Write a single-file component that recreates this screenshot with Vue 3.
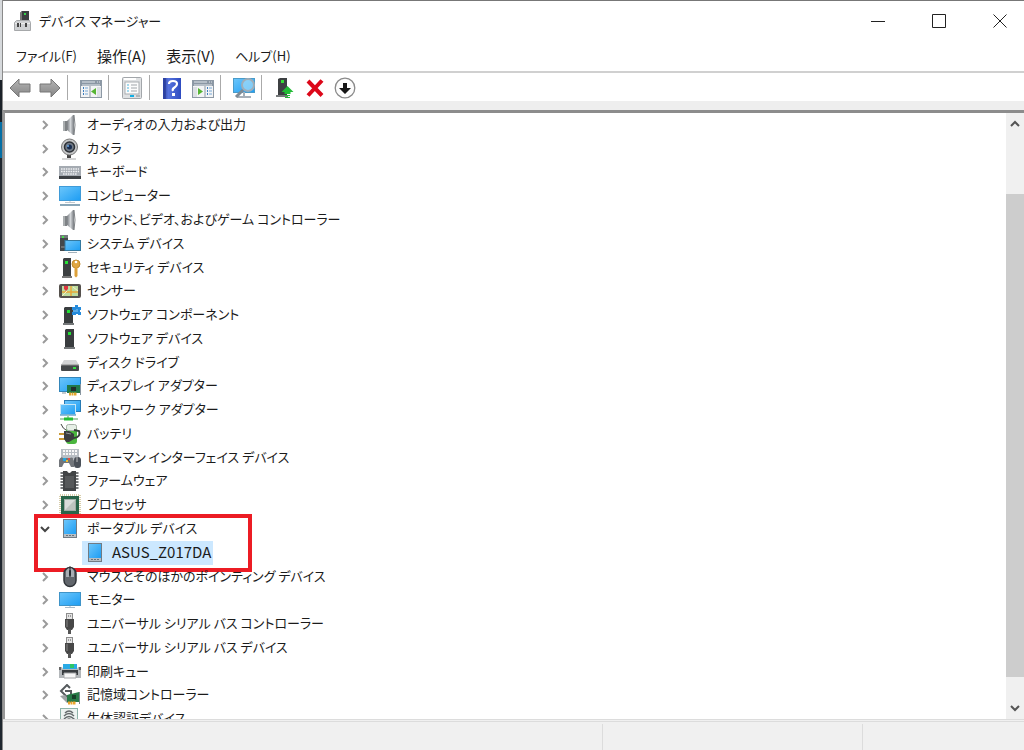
<script setup>
const menus = [
  { text: 'ファイル(F)' },
  { text: '操作(A)', wide: true },
  { text: '表示(V)', wide: true },
  { text: 'ヘルプ(H)' },
]

const tools = [
  [
    { icon: 'back', label: '戻る' },
    { icon: 'forward', label: '進む' },
  ],
  [{ icon: 'tree-pane', label: 'コンソール ツリーの表示' }],
  [{ icon: 'properties', label: 'プロパティ' }],
  [
    { icon: 'help', label: 'ヘルプの表示' },
    { icon: 'action-pane', label: '操作ウィンドウの表示' },
  ],
  [{ icon: 'scan', label: 'ハードウェア変更のスキャン' }],
  [
    { icon: 'update', label: 'ドライバーの更新' },
    { icon: 'remove', label: 'デバイスのアンインストール' },
    { icon: 'disable', label: 'デバイスを無効にする' },
  ],
]

const devices = [
  { icon: 'speaker', name: 'オーディオの入力および出力' },
  { icon: 'camera', name: 'カメラ' },
  { icon: 'keyboard', name: 'キーボード' },
  { icon: 'computer', name: 'コンピューター' },
  { icon: 'speaker', name: 'サウンド、ビデオ、およびゲーム コントローラー' },
  { icon: 'system', name: 'システム デバイス' },
  { icon: 'security', name: 'セキュリティ デバイス' },
  { icon: 'sensor', name: 'センサー' },
  { icon: 'component', name: 'ソフトウェア コンポーネント' },
  { icon: 'software', name: 'ソフトウェア デバイス' },
  { icon: 'disk', name: 'ディスク ドライブ' },
  { icon: 'display', name: 'ディスプレイ アダプター' },
  { icon: 'network', name: 'ネットワーク アダプター' },
  { icon: 'battery', name: 'バッテリ' },
  { icon: 'hid', name: 'ヒューマン インターフェイス デバイス' },
  { icon: 'firmware', name: 'ファームウェア' },
  { icon: 'cpu', name: 'プロセッサ' },
  { icon: 'portable', name: 'ポータブル デバイス', children: ['ASUS_Z017DA'] },
  { icon: 'mouse', name: 'マウスとそのほかのポインティング デバイス' },
  { icon: 'monitor', name: 'モニター' },
  { icon: 'usb', name: 'ユニバーサル シリアル バス コントローラー' },
  { icon: 'usb', name: 'ユニバーサル シリアル バス デバイス' },
  { icon: 'printer', name: '印刷キュー' },
  { icon: 'storage', name: '記憶域コントローラー' },
  { icon: 'biometric', name: '生体認証デバイス' },
]
</script>

<template>
  <div class="desktop">
    <svg class="defs" aria-hidden="true">
      <defs>
        <linearGradient id="g-screen" x1="0" y1="0" x2="1" y2="1">
          <stop offset="0" stop-color="#6cc6fb" />
          <stop offset="1" stop-color="#1d9df3" />
        </linearGradient>
        <linearGradient id="g-metal" x1="0" y1="0" x2="1" y2="0">
          <stop offset="0" stop-color="#777b80" />
          <stop offset=".5" stop-color="#d2d5d8" />
          <stop offset="1" stop-color="#777b80" />
        </linearGradient>
        <linearGradient id="g-arrow" x1="0" y1="0" x2="0" y2="1">
          <stop offset="0" stop-color="#b5b5b5" />
          <stop offset="1" stop-color="#858585" />
        </linearGradient>
        <linearGradient id="g-help" x1="0" y1="0" x2="1" y2="0">
          <stop offset="0" stop-color="#2a3fa0" />
          <stop offset=".3" stop-color="#5673de" />
          <stop offset="1" stop-color="#2d4bc0" />
        </linearGradient>

        <symbol id="device-manager" viewBox="0 0 20 22">
          <path d="M7 10V3l2-2h7v9z" fill="#3b3e40" />
          <path d="M7 3l2-2v9H7z" fill="#777" />
          <rect x="11" y="3" width="2" height="2" fill="#35d44a" />
          <path d="M3.500 10.500h13l1 2v8h-16v-8z" fill="#cfd1d3" stroke="#a6a8aa" />
          <path d="M2 13.500h15" stroke="#ececec" />
          <path d="M4 13h2v4H4zM7 13h1v4H7zM12 13h2v4h-2z" fill="#444" />
        </symbol>
        <symbol id="back" viewBox="0 0 22 22">
          <path d="M1 11L10 2v5h11v8H10v5z" fill="url(#g-arrow)" stroke="#777" />
        </symbol>
        <symbol id="forward" viewBox="0 0 22 22">
          <path d="M21 11L12 2v5H1v8h11v5z" fill="url(#g-arrow)" stroke="#777" />
        </symbol>
        <symbol id="tree-pane" viewBox="0 0 22 22">
          <rect x=".5" y="3.500" width="21" height="17" fill="#f3f4f5" stroke="#8d99a5" />
          <rect x="1" y="4" width="20" height="5" fill="#8b97a4" />
          <path d="M2 5h13M17 5h1M19 5h1M2 8h18" stroke="#dfe5ea" />
          <path d="M10 9v11" stroke="#8d99a5" />
          <path d="M3 11h1M3 14h1M3 17h1" stroke="#3d7fc0" stroke-width="2" />
          <path d="M5 11h3M5 14h3M5 17h3" stroke="#78a9d6" />
          <path d="M16 11v7l-5-3.500z" fill="#56b533" />
          <path d="M17 10v10h4V10z" fill="#dce0e4" />
        </symbol>
        <symbol id="action-pane" viewBox="0 0 22 22">
          <rect x=".5" y="3.500" width="21" height="17" fill="#f3f4f5" stroke="#8d99a5" />
          <rect x="1" y="4" width="20" height="5" fill="#8b97a4" />
          <path d="M2 5h13M17 5h1M19 5h1M2 8h18" stroke="#dfe5ea" />
          <path d="M13 9v11" stroke="#8d99a5" />
          <path d="M15 11h1M15 14h1M15 17h1" stroke="#3d7fc0" stroke-width="2" />
          <path d="M17 11h3M17 14h3M17 17h3" stroke="#78a9d6" />
          <path d="M6 11v7l5-3.500z" fill="#56b533" />
          <path d="M1 10v10h4V10z" fill="#dce0e4" />
        </symbol>
        <symbol id="properties" viewBox="0 0 22 22">
          <rect x="1.500" y=".5" width="19" height="21" rx="1" fill="#dfe1e3" stroke="#a2a6aa" />
          <path d="M3 2h12" stroke="#fff" stroke-width="2" />
          <rect x="4" y="5" width="14" height="12" fill="#fcfcfc" stroke="#a9adb1" />
          <path d="M6 8h2M6 11h2M6 14h2" stroke="#4ab5df" />
          <path d="M10 8h6M10 11h6M10 14h6" stroke="#a0a5aa" />
          <path d="M9 19h4" stroke="#12aee3" stroke-width="2" />
          <path d="M15 19h4" stroke="#b1b5b8" stroke-width="2" />
        </symbol>
        <symbol id="help" viewBox="0 0 22 22">
          <rect x="1" y="1" width="18" height="21" fill="url(#g-help)" />
          <path d="M3 1v21" stroke="#24378f" />
          <path d="M7 7q0-3 4-3t4 3q0 2-2.500 3.500T11 14" fill="none" stroke="#fff" stroke-width="2.200" />
          <rect x="10" y="16" width="3" height="3" fill="#fff" />
        </symbol>
        <symbol id="scan" viewBox="0 0 22 22">
          <rect x=".5" y="1.500" width="21" height="14" fill="url(#g-screen)" stroke="#4a9bc9" />
          <path d="M11 15v4M4 20h14" stroke="#a6afb8" stroke-width="2" />
          <circle cx="15" cy="8" r="6" fill="#9edaf8" fill-opacity=".75" stroke="#9faeb9" stroke-width="2" />
          <path d="M10 13l-7 7" stroke="#7f8b95" stroke-width="3" />
        </symbol>
        <symbol id="update" viewBox="0 0 22 22">
          <path d="M4 2l2-1h7v17H4z" fill="#3d4042" />
          <path d="M2 18h12v2H2z" fill="#777a7c" />
          <rect x="7" y="3" width="3" height="3" fill="#35dc35" />
          <path d="M13.500 9l6 6h-3v2h-6v-2h-3z" fill="#23bb36" />
          <path d="M11 18.500h5M11 20.500h5" stroke="#23bb36" />
        </symbol>
        <symbol id="remove" viewBox="0 0 22 22">
          <path d="M4 4L18 18.500M18 3.500L4 18.500" stroke="#dc0719" stroke-width="4" />
        </symbol>
        <symbol id="disable" viewBox="0 0 22 22">
          <circle cx="11" cy="11" r="9.800" fill="#fcfcfc" stroke="#8a8a8a" stroke-width="1.300" />
          <path d="M9 6h4v5h4l-6 6-6-6h4z" fill="#151515" />
        </symbol>

        <symbol id="speaker" viewBox="0 0 22 22">
          <path d="M4 7h4v10H4z" fill="#7e8285" />
          <path d="M4 7h2v10H4z" fill="#aaaeb0" />
          <path d="M8 7l6-6h1v20h-1l-6-5z" fill="url(#g-metal)" />
          <path d="M15 1q2 10 0 20" fill="none" stroke="#7e8285" />
        </symbol>
        <symbol id="camera" viewBox="0 0 22 22">
          <path d="M8 17h4v3H8z" fill="#444" />
          <path d="M3 21h14" stroke="#aaa" />
          <circle cx="10.500" cy="9" r="8" fill="#c5c6c7" stroke="#797979" />
          <circle cx="10.500" cy="9" r="5" fill="#727b87" stroke="#2c3035" stroke-width="1.500" />
          <circle cx="10.500" cy="9" r="2.500" fill="#182d50" />
          <circle cx="9" cy="8" r="1" fill="#6da8e6" />
        </symbol>
        <symbol id="keyboard" viewBox="0 0 22 22">
          <rect x="0" y="5" width="22" height="12" fill="#a5abb2" />
          <path d="M2 8h18M2 10.500h18M4 13h14" stroke="#eef0f2" stroke-width="1.500" stroke-dasharray="1.600 .8" />
          <path d="M0 15h22v3H0z" fill="#3c4044" />
        </symbol>
        <symbol id="computer" viewBox="0 0 22 22">
          <rect x=".5" y="1.500" width="21" height="14" fill="url(#g-screen)" stroke="#3f9bd8" />
          <path d="M11 16v2M6 17.500h10" stroke="#c2c9cf" />
          <path d="M1 20h20" stroke="#8aa7b8" stroke-width="2" />
        </symbol>
        <symbol id="system" viewBox="0 0 22 22">
          <path d="M1 2h8v16H1z" fill="#44484b" />
          <path d="M1 2h8v3H1z" fill="#74797d" />
          <path d="M3 4h2" stroke="#49e04b" stroke-width="2" />
          <path d="M2 14h5" stroke="#999" />
          <rect x="6" y="7.500" width="15.500" height="10" fill="url(#g-screen)" stroke="#35799f" />
          <path d="M9 19.500h9" stroke="#a5b2bb" />
        </symbol>
        <symbol id="security" viewBox="0 0 22 22">
          <path d="M4 2l1-1h7v18H4z" fill="#3c3f41" />
          <path d="M3 20h10" stroke="#777" stroke-width="2" />
          <rect x="6" y="4" width="3" height="3" fill="#27e037" />
          <circle cx="17" cy="7" r="4" fill="#e0a743" stroke="#c18a2d" />
          <circle cx="17" cy="5" r="1.300" fill="#fff" />
          <path d="M15.500 10h3v9l-1.500 1.500-1.500-1.500z" fill="#dda13b" />
        </symbol>
        <symbol id="sensor" viewBox="0 0 22 22">
          <rect x="0" y="4" width="22" height="14" rx="2" fill="#55514d" />
          <rect x="3" y="6" width="16" height="10" fill="#bddc9f" />
          <path d="M3 12h16M12 6v10" stroke="#e9a838" stroke-width="1.500" />
          <path d="M3 16l5-5M14 7l5 4" stroke="#f7f1c4" />
          <path d="M5 6h4v3L7 11 5 9z" fill="#df3440" />
        </symbol>
        <symbol id="component" viewBox="0 0 22 22">
          <path d="M5 4l1-1h8v16H5z" fill="#393d3f" />
          <path d="M4 20h11" stroke="#747779" stroke-width="2" />
          <rect x="8" y="6" width="3" height="3" fill="#23df35" />
          <path d="M13 3h3V1h3v2h3v3h-1v2h1v3h-3v-1h-2v1h-4V8h1V6h-1z" fill="#258bdc" />
          <path d="M14 7h3M18 5v3" stroke="#8cc8f2" />
        </symbol>
        <symbol id="software" viewBox="0 0 22 22">
          <path d="M6 2l1-1h8v18H6z" fill="#393c3e" />
          <path d="M5 20h11" stroke="#747779" stroke-width="2" />
          <rect x="9" y="4" width="3" height="3" fill="#23df35" />
        </symbol>
        <symbol id="disk" viewBox="0 0 22 22">
          <path d="M5 8h12l3 5H2z" fill="#d4d5d6" />
          <rect x="2" y="13" width="18" height="6" rx="1" fill="#45484a" />
          <rect x="14" y="15" width="3" height="2" fill="#37dc43" />
          <path d="M2 13h18" stroke="#888" />
        </symbol>
        <symbol id="display" viewBox="0 0 22 22">
          <rect x=".5" y="2.500" width="21" height="14" fill="url(#g-screen)" stroke="#3486ba" />
          <rect x="8" y="10" width="13" height="8" fill="#20794b" />
          <rect x="12" y="12" width="5" height="4" fill="#222d2c" />
          <path d="M10 19h8" stroke="#e0a62d" stroke-width="3" stroke-dasharray="2 .5" />
          <path d="M21.500 9v11M3 18h4" stroke="#87959f" />
        </symbol>
        <symbol id="network" viewBox="0 0 22 22">
          <rect x="5.500" y="1.500" width="16" height="11" fill="url(#g-screen)" stroke="#277ab3" />
          <rect x="1.500" y="5.500" width="15" height="10" fill="url(#g-screen)" stroke="#c5e6f5" />
          <path d="M1 16h16" stroke="#277ab3" />
          <path d="M9 16v4M1 20h18" stroke="#a8cfb0" stroke-width="2" />
          <path d="M5 20h9" stroke="#25bd35" stroke-width="3" />
        </symbol>
        <symbol id="battery" viewBox="0 0 22 22">
          <path d="M2 1q2 5 5 6" fill="none" stroke="#444" />
          <rect x="7" y="2" width="11" height="19" rx="3" fill="#4bb63f" />
          <rect x="7.500" y="1.500" width="10" height="6" rx="2" fill="#e6efe6" stroke="#a9b2aa" />
          <path d="M15 15q7-1 5-7l-5-1" fill="none" stroke="#383d3b" stroke-width="2" />
          <path d="M0 11h6M0 16h6" stroke="#c89935" stroke-width="2" />
          <path d="M5 8h5l5 3v5l-5 3H7l-2-3z" fill="#3b3e3f" />
          <path d="M7 10l5 1" stroke="#8e9394" />
        </symbol>
        <symbol id="hid" viewBox="0 0 22 22">
          <rect x="2" y="2" width="18" height="10" fill="#b8bec4" />
          <path d="M4 4h14M4 7h14" stroke="#f8f8f8" stroke-width="2" stroke-dasharray="2 1" />
          <path d="M0 20V13q2-4 4-2h7q3-2 4 3v6h-3l-2-4H5l-2 4z" fill="#72767b" />
          <rect x="15" y="10" width="7" height="11" rx="3" fill="#4b5159" />
          <path d="M18 10v5" stroke="#bbb" />
          <rect x="4" y="11" width="3" height="3" fill="#23a5dc" />
          <rect x="7" y="13" width="2" height="2" fill="#eebe31" />
          <rect x="9" y="11" width="2" height="2" fill="#e24d42" />
        </symbol>
        <symbol id="firmware" viewBox="0 0 22 22">
          <path d="M3 2v18M18 2v18" stroke="#77797b" stroke-width="3" stroke-dasharray="2 1" />
          <path d="M4 1h4q2 4 5 0h4v20H4z" fill="#424446" />
          <path d="M6 6h9v12H6z" fill="#56585a" />
        </symbol>
        <symbol id="cpu" viewBox="0 0 22 22">
          <rect x="1" y="1" width="20" height="20" fill="none" stroke="#b19b54" stroke-dasharray="1 1" />
          <rect x="2" y="2" width="18" height="18" fill="#286448" />
          <rect x="5.500" y="5.500" width="11" height="11" fill="#d9ddda" stroke="#a1ada6" />
          <path d="M6 16L16 6v10z" fill="#bdc4bf" />
        </symbol>
        <symbol id="portable" viewBox="0 0 22 22">
          <rect x="4" y="1" width="14" height="19" fill="#717b84" />
          <rect x="5" y="2" width="12" height="14" fill="url(#g-screen)" />
          <rect x="5" y="16" width="12" height="3" fill="#b9bfc4" />
          <path d="M7 17.500h2M10 17.500h2M13 17.500h2" stroke="#69737c" />
        </symbol>
        <symbol id="mouse" viewBox="0 0 22 22">
          <path d="M11 0v4" stroke="#555" />
          <rect x="5" y="1.500" width="12" height="19" rx="6" fill="#61666c" stroke="#2f3439" stroke-width="1.500" />
          <path d="M7 5q1-2 3-3v9H7zM12 2q2 1 3 3v6h-3z" fill="#a7adb3" />
          <rect x="10" y="4" width="2" height="6" rx="1" fill="#272d32" />
        </symbol>
        <symbol id="monitor" viewBox="0 0 22 22">
          <rect x=".5" y="3.500" width="21" height="13" fill="url(#g-screen)" stroke="#3f94c8" />
          <path d="M11 17v1M6 18.500h10" stroke="#a9bbc8" />
        </symbol>
        <symbol id="usb" viewBox="0 0 22 22">
          <rect x="7.500" y=".5" width="6" height="6" fill="#e4e4e4" stroke="#8d8d8d" />
          <path d="M9 3h1M11 3h1" stroke="#555" />
          <path d="M6 6h9v8l-2 3H8l-2-3z" fill="#474747" />
          <path d="M8 7v7" stroke="#858585" />
          <path d="M10.500 16v5" stroke="#555" stroke-width="3" />
        </symbol>
        <symbol id="printer" viewBox="0 0 22 22">
          <path d="M4 8V3h14v5z" fill="#2aaae5" />
          <path d="M11 3h4v4h-4z" fill="#2cc568" />
          <path d="M0 6h3l1 2h14l1-2h3v11H0z" fill="#b3b7ba" />
          <path d="M0 6h2v3H0zM20 6h2v3h-2z" fill="#666" />
          <rect x="3" y="9" width="16" height="5" fill="#393d40" />
          <path d="M5 12h12v5H5z" fill="#f7f7f7" stroke="#a4a6a8" />
        </symbol>
        <symbol id="storage" viewBox="0 0 22 22">
          <path d="M11 4L8 1 2 7l6 6 3-2M6 7h6v4" fill="none" stroke="#555a5d" stroke-width="2" />
          <path d="M1 12l7 7h5l-7-8z" fill="#9ea2a4" />
          <path d="M8 11l12-3v10H8z" fill="#277947" />
          <rect x="13" y="11" width="4" height="4" fill="#173f2a" />
          <path d="M9 19h8" stroke="#eba42b" stroke-width="3" stroke-dasharray="2 .5" />
          <path d="M20.500 8v12" stroke="#77858a" />
        </symbol>
        <symbol id="biometric" viewBox="0 0 22 22">
          <rect x="1.500" y=".5" width="17" height="21" fill="#edf3f1" stroke="#8eb4aa" />
          <path d="M6 5q4-4 8 0M5 8q5-5 10 0M5 11q5-5 10 0v8M7 13q3-4 6 0v8M5 14v4M10 13v8" fill="none" stroke="#656a6c" stroke-width="1.500" />
        </symbol>
      </defs>
    </svg>

    <div class="backdrop" aria-hidden="true">
      <div class="backdrop-light"></div>
      <div class="backdrop-dark"></div>
      <div class="backdrop-blue"></div>
      <div class="backdrop-rest"></div>
    </div>

    <main class="window">
      <header class="titlebar">
        <svg class="app-icon" aria-hidden="true"><use href="#device-manager" /></svg>
        <h1>デバイス マネージャー</h1>
        <div class="controls">
          <button aria-label="最小化">
            <svg viewBox="0 0 14 14"><path d="M0 7.500h14" /></svg>
          </button>
          <button aria-label="最大化">
            <svg viewBox="0 0 14 14"><path d="M.5.5h13v13H.5z" /></svg>
          </button>
          <button aria-label="閉じる">
            <svg viewBox="0 0 14 14"><path d="M.5.5l13 13M13.500.5l-13 13" /></svg>
          </button>
        </div>
      </header>

      <nav class="menubar">
        <button v-for="menu in menus" :key="menu.text" :class="{ wide: menu.wide }">{{ menu.text }}</button>
      </nav>

      <div class="toolbar" role="toolbar" aria-label="ツール バー">
        <div v-for="(group, i) in tools" :key="i" class="tool-group">
          <button v-for="tool in group" :key="tool.icon" :aria-label="tool.label">
            <svg><use :href="'#' + tool.icon" /></svg>
          </button>
        </div>
      </div>

      <section class="pane">
        <div class="tree-view">
          <ul class="tree">
            <li v-for="device in devices" :key="device.name" :class="{ open: device.children }">
              <div class="row">
                <button class="chevron" :aria-label="device.name" :aria-expanded="!!device.children">
                  <svg viewBox="0 0 12 12">
                    <path :d="device.children ? 'M2 4l4 4 4-4' : 'M4 2l4 4-4 4'" />
                  </svg>
                </button>
                <svg class="icon" aria-hidden="true"><use :href="'#' + device.icon" /></svg>
                <span class="name">{{ device.name }}</span>
              </div>
              <ul v-if="device.children" class="children">
                <li v-for="child in device.children" :key="child" class="selected">
                  <svg class="icon" aria-hidden="true"><use href="#portable" /></svg>
                  <span class="name">{{ child }}</span>
                </li>
              </ul>
              <div v-if="device.children" class="highlight"></div>
            </li>
          </ul>
        </div>
        <div class="scrollbar">
          <button aria-label="上へスクロール">
            <svg viewBox="0 0 10 10"><path d="M1 7l4-4 4 4" /></svg>
          </button>
          <div class="track"><div class="thumb"></div></div>
          <button aria-label="下へスクロール">
            <svg viewBox="0 0 10 10"><path d="M1 3l4 4 4-4" /></svg>
          </button>
        </div>
      </section>

      <footer class="statusbar">
        <div></div>
        <div></div>
        <div></div>
      </footer>
    </main>
  </div>
</template>

<style>
body {
  margin: 0;
  overflow: hidden;
}
</style>

<style scoped>
.desktop {
  display: flex;
  height: 100vh;
  color: #1b1b1b;
  font: 13px/20px "Noto Sans CJK JP", sans-serif;
  font-feature-settings: "palt";
}
.defs {
  position: absolute;
  width: 0;
  height: 0;
}
button {
  padding: 0;
  border: 0;
  background: none;
  color: inherit;
  font: inherit;
  font-feature-settings: inherit;
}
button svg {
  display: block;
}
ul {
  margin: 0;
  padding: 0;
  list-style: none;
}
.backdrop {
  display: flex;
  flex-direction: column;
  width: 3px;
  border-right: 1px solid #8a8a8a;
  box-sizing: border-box;
}
.backdrop-light {
  height: 80px;
  background: #d6d9dc;
}
.backdrop-dark {
  height: 42px;
  background: #1b2229;
}
.backdrop-blue {
  height: 36px;
  background: #056fa5;
}
.backdrop-rest {
  flex: 1;
  background: #1f272f;
}
.window {
  flex: 1;
  min-width: 0;
  display: flex;
  flex-direction: column;
  border-top: 1px solid #777;
  background: #fff;
}
.titlebar {
  display: flex;
  align-items: center;
  height: 40px;
  padding-left: 10px;
}
.app-icon {
  width: 20px;
  height: 22px;
  margin-right: 6px;
}
h1 {
  flex: 1;
  margin: 0;
  font-size: 13px;
  font-weight: 400;
}
.controls {
  display: flex;
}
.controls button {
  display: grid;
  place-items: center;
  width: 61px;
  height: 40px;
}
.controls button:last-child {
  width: 55px;
  padding-left: 6px;
}
.controls svg {
  width: 14px;
  height: 14px;
  fill: none;
  stroke: #222;
}
.menubar {
  display: flex;
  gap: 20px;
  height: 30px;
  padding-left: 13px;
  border-bottom: 2px solid #d0d0d0;
}
.menubar .wide {
  font-size: 15px;
}
.toolbar {
  display: flex;
  align-items: center;
  height: 28px;
  padding-left: 6px;
  border-bottom: 9px solid #eee;
}
.tool-group {
  display: flex;
  gap: 8px;
  padding: 2px 6px 1px 0;
}
.tool-group + .tool-group {
  padding-left: 12px;
  border-left: 1px solid #aaa;
}
.tool-group svg {
  width: 22px;
  height: 22px;
}
.pane {
  flex: 1;
  min-height: 0;
  display: flex;
  border-top: 3px solid #8c8c8c;
  border-left: 2px solid #999;
}
.tree-view {
  flex: 1;
  overflow: hidden;
}
.tree {
  display: grid;
  grid-template-rows: repeat(26, 1fr);
  height: 102%;
}
.tree > li {
  position: relative;
  display: grid;
  min-height: 0;
}
.tree > .open {
  grid-row: span 2;
  grid-template-rows: 1fr 1fr;
}
.row {
  display: flex;
  align-items: center;
  min-height: 0;
  padding-left: 34px;
  white-space: nowrap;
}
.name {
  padding-bottom: 2px;
}
.chevron {
  margin-right: 8px;
}
.chevron svg {
  width: 12px;
  height: 12px;
  fill: none;
  stroke: #9a9a9a;
  stroke-width: 2;
}
.open .chevron svg {
  stroke: #444;
}
.icon {
  flex: none;
  width: 22px;
  height: 22px;
  margin-right: 6px;
}
.children {
  display: flex;
  min-height: 0;
  padding-left: 77px;
}
.selected {
  display: flex;
  align-items: center;
  padding: 0 2px;
  background: #cce8ff;
  font-size: 15px;
}
.highlight {
  position: absolute;
  top: -3px;
  bottom: -7px;
  left: 29px;
  width: 210px;
  border: 4px solid #ec1c24;
}
.scrollbar {
  display: flex;
  flex-direction: column;
  width: 18px;
  background: #f0f0f0;
}
.scrollbar button {
  display: grid;
  place-items: center;
  height: 22px;
}
.scrollbar svg {
  width: 10px;
  height: 10px;
  fill: none;
  stroke: #555;
  stroke-width: 2;
}
.track {
  flex: 1;
  display: flex;
  flex-direction: column;
  justify-content: flex-end;
}
.thumb {
  height: 86%;
  margin-bottom: 20px;
  background: #cdcdcd;
}
.statusbar {
  display: grid;
  grid-template-columns: 1fr 260px 162px;
  height: 26px;
  padding-top: 2px;
  border-top: 3px double #dcdcdc;
  background: #f0f0f0;
}
.statusbar div + div {
  border-left: 1px solid #dcdcdc;
}
</style>
